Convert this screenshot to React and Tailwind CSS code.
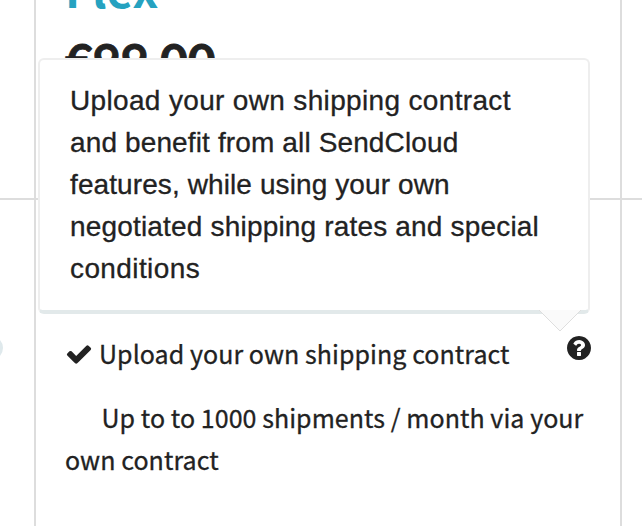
function CheckIcon() {
  return (
    <svg viewBox="0 0 1792 1792" className="mt-[4px] h-7 w-7 shrink-0 fill-[#222]">
      <path d="M1671 566q0 40-28 68l-724 724-136 136q-28 28-68 28t-68-28l-136-136-362-362q-28-28-28-68t28-68l136-136q28-28 68-28t68 28l294 295 656-657q28-28 68-28t68 28l136 136q28 28 28 68z" />
    </svg>
  );
}

function HelpIcon() {
  return (
    <svg viewBox="0 0 1792 1792" className="-mt-[2px] ml-auto h-7 w-7 shrink-0 fill-[#222]">
      <path d="M1024 1376v-192q0-14-9-23t-23-9h-192q-14 0-23 9t-9 23v192q0 14 9 23t23 9h192q14 0 23-9t9-23zm256-672q0-88-55.5-163t-138.5-116-170-41q-243 0-371 213-15 24 8 42l132 100q7 6 19 6 16 0 25-12 53-68 86-92 34-24 86-24 48 0 85.500 26t37.500 59q0 38-20 61t-68 45q-63 28-115.500 86.500t-52.500 125.500v36q0 14 9 23t23 9h192q14 0 23-9t9-23q0-19 21.500-49.500t54.500-49.500q32-18 49-28.500t46-35 44.500-48 28-60.500 12.500-81zm384 192q0 209-103 385.500t-279.500 279.500-385.500 103-385.500-103-279.500-279.500-103-385.500 103-385.500 279.500-279.500 385.500-103 385.500 103 279.500 279.500 103 385.500z" />
    </svg>
  );
}

function Tooltip() {
  return (
    <div className="absolute top-[58px] left-[38px] h-[256px] w-[552px] rounded-md border-2 border-b-4 border-[#eee] border-b-[#e2e9ea] bg-white pt-[20px] pl-[30px] font-['Liberation_Sans',Arial,sans-serif] text-[28px] leading-[42px] whitespace-nowrap text-[#222] [-webkit-text-stroke:0.3px_#222]">
      <p className="tracking-[0.34px]">Upload your own shipping contract</p>
      <p className="tracking-[0.13px]">and benefit from all SendCloud</p>
      <p className="tracking-[0.1px]">features, while using your own</p>
      <p className="tracking-[0.18px]">negotiated shipping rates and special</p>
      <p className="tracking-[0.4px]">conditions</p>
      <svg viewBox="0 0 42 22" className="absolute top-[250px] left-[499px] h-[22px] w-[42px]">
        <path d="M0 0L21 21L42 0Z" className="fill-[#fafafa]" />
        <path d="M0 0L21 21L42 0" className="fill-none stroke-[#dedede]" />
      </svg>
    </div>
  );
}

export default function App() {
  return (
    <div className="relative grid h-[526px] w-[642px] grid-cols-[36px_586px_20px] overflow-hidden bg-white text-[#222]">
      <div className="overflow-hidden border-r-2 border-[#ddd]">
        <div className="h-[200px] border-b-2 border-[#ddd]" />
        <div className="mt-[136px] -ml-[21px] h-6 w-6 rounded-full bg-[#dfe9ec]" />
      </div>
      <div className="border-r-2 border-[#ddd]">
        <div className="h-[200px] overflow-hidden border-b-2 border-[#ddd] pl-[29px] font-bold">
          <h2 className="-mt-[39px] h-[54px] font-['Noto_Sans_CJK_SC',sans-serif] text-[46px] leading-[54px] text-[#26a2c0]">Flex</h2>
          <p className="mt-[16px] font-['Lato',sans-serif] text-[48px] leading-[60px] [-webkit-text-stroke:0.8px_#222]">€99.00</p>
        </div>
        <div className="pt-[136px] pl-[29px] font-['Noto_Sans_CJK_SC',sans-serif] text-[25px] leading-[42px] tracking-[0.06px] whitespace-nowrap [-webkit-text-stroke:0.3px_#222]">
          <div className="flex h-[60px] items-start">
            <CheckIcon />
            <span className="-mt-[4px] ml-[6px]">Upload your own shipping contract</span>
            <div className="ml-auto pr-[27px]"><HelpIcon /></div>
          </div>
          <p className="pl-[36.500px]">Up to to 1000 shipments / month via your</p>
          <p>own contract</p>
        </div>
      </div>
      <div className="border-[#ddd]">
        <div className="h-[200px] border-b-2 border-[#ddd]" />
      </div>
      <Tooltip />
    </div>
  );
}
